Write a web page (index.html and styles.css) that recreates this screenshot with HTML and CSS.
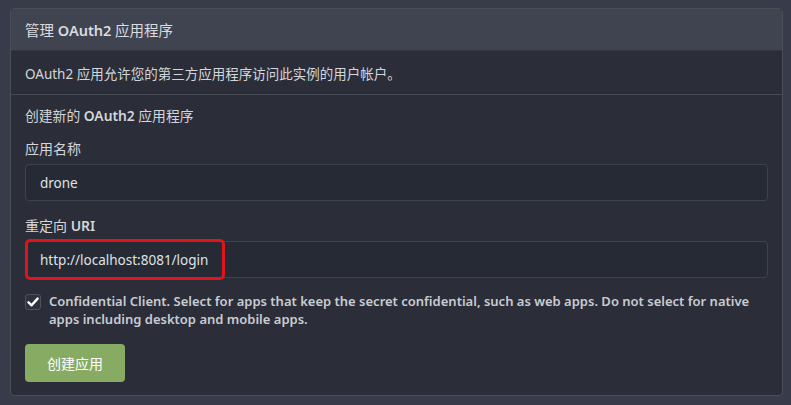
FILE: index.html
```html
<!DOCTYPE html>
<html lang="zh">
<head>
<meta charset="utf-8">
<link rel="stylesheet" href="styles.css">
</head>
<body>
<div class="card">
  <div class="card-header">管理 <b class="latin-bold">OAuth2</b> 应用程序</div>
  <div class="card-desc">OAuth2 应用允许您的第三方应用程序访问此实例的用户帐户。</div>
  <div class="card-form">
    <div class="form-title">创建新的 <b class="latin-bold">OAuth2</b> 应用程序</div>
    <div class="field">
      <label class="field-label">应用名称</label>
      <div class="input">drone</div>
    </div>
    <div class="field">
      <label class="field-label">重定向 <b class="latin-bold">URI</b></label>
      <div class="input input-marked"><span class="mark">http://localhost:8081/login</span></div>
    </div>
    <div class="check-row">
      <span class="checkbox"><svg width="12" height="12" viewBox="0 0 12 12"><path d="M1.5 6.3 L4.6 9.3 L10.6 2.6" fill="none" stroke="#ffffff" stroke-width="2.4" stroke-linecap="round" stroke-linejoin="round"/></svg></span>
      <span class="check-text">Confidential Client. Select for apps that keep the secret confidential, such as web apps. Do not select for native apps including desktop and mobile apps.</span>
    </div>
    <button class="btn">创建应用</button>
  </div>
</div>
</body>
</html>
```
FILE: styles.css
```css
* { box-sizing: border-box; }
html, body { margin: 0; padding: 0; }
body {
  background: #383b49;
  font-family: "Segoe UI", "Noto Sans", "Noto Sans CJK SC", sans-serif;
  color: #d3d6db;
  width: 791px;
  height: 405px;
  overflow: hidden;
  padding: 8px 8px 0 10px;
}
.latin-bold { font-weight: 600; }
.card {
  border: 1px solid #4a4e59;
  border-radius: 4px;
  background: #2b2e39;
  height: 388px;
}
.card-header {
  background: #404450;
  height: 42px;
  padding: 0 14px;
  display: flex;
  align-items: center;
  white-space: pre;
  font-size: 14.5px;
  border-bottom: 1px solid #33363f;
  border-radius: 4px 4px 0 0;
  color: #d9dce1;
}
.card-desc {
  height: 44px;
  padding: 0 14px;
  display: flex;
  align-items: center;
  font-size: 13.5px;
  border-bottom: 1px solid #464a55;
}
.card-form {
  padding: 11px 14px 0 14px;
}
.form-title {
  font-size: 13.8px;
  line-height: 19px;
  margin-bottom: 14px;
}
.field { margin-bottom: 15px; }
.field-label {
  display: block;
  font-size: 14px;
  line-height: 19px;
  margin-bottom: 6px;
}
.input {
  height: 37px;
  border: 1px solid #3e424d;
  border-radius: 4px;
  background: #262a34;
  font-size: 13.5px;
  color: #dfe2e6;
  display: flex;
  align-items: center;
  padding-left: 14px;
}
.input-marked { padding-left: 0; }
.mark {
  flex: none;
  height: 41px;
  width: 200px;
  margin-left: -1px;
  border: 3px solid #e0141c;
  border-radius: 5px;
  display: flex;
  align-items: center;
  padding-left: 12px;
}
.check-row {
  display: flex;
  gap: 8px;
  margin-top: -1px;
}
.checkbox {
  flex: none;
  width: 16px;
  height: 16px;
  margin-top: 2px;
  border: 1px solid #4d515c;
  border-radius: 3px;
  background: #2e323d;
  display: flex;
  align-items: center;
  justify-content: center;
}
.check-text {
  font-size: 13px;
  font-weight: 600;
  line-height: 18px;
  color: #c9ccd2;
}
.btn {
  margin-top: 16px;
  width: 100px;
  height: 38px;
  border: none;
  border-radius: 4px;
  background: #87ab63;
  color: #ffffff;
  font-family: inherit;
  font-size: 14px;
  padding: 0;
}
```
